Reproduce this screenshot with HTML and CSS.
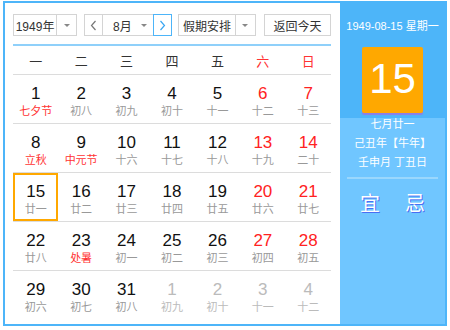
FILE: index.html
```html
<!DOCTYPE html>
<html lang="zh-CN">
<head>
    <meta charset="UTF-8">
    <title>万年历</title>
    <link rel="stylesheet" href="styles.css">
</head>
<body>
    <div class="calendar">
        <div class="main">
            <div class="toolbar">
                <div class="select year">
                    <span class="select-text">1949年</span>
                    <span class="select-arrow"><i></i></span>
                </div>
                <div class="month-box">
                    <span class="nav prev">
                        <svg width="7" height="11" viewBox="0 0 7 11"><polyline points="5.5,1 1.5,5.5 5.5,10" fill="none" stroke="#777" stroke-width="1.2"/></svg>
                    </span>
                    <div class="select month">
                        <span class="select-text">8月</span>
                        <span class="select-arrow"><i></i></span>
                    </div>
                    <span class="nav next">
                        <svg width="7" height="11" viewBox="0 0 7 11"><polyline points="1.5,1 5.5,5.5 1.5,10" fill="none" stroke="#3aa6f2" stroke-width="1.2"/></svg>
                    </span>
                </div>
                <div class="select holiday">
                    <span class="select-text">假期安排</span>
                    <span class="select-arrow"><i></i></span>
                </div>
                <button class="today-btn">返回今天</button>
            </div>

            <div class="week">
                <span>一</span><span>二</span><span>三</span><span>四</span><span>五</span>
                <span class="red">六</span><span class="red">日</span>
            </div>

            <div class="days">
                <div class="row">
                    <div class="day"><b>1</b><em class="fest">七夕节</em></div>
                    <div class="day"><b>2</b><em>初八</em></div>
                    <div class="day"><b>3</b><em>初九</em></div>
                    <div class="day"><b>4</b><em>初十</em></div>
                    <div class="day"><b>5</b><em>十一</em></div>
                    <div class="day weekend"><b>6</b><em>十二</em></div>
                    <div class="day weekend"><b>7</b><em>十三</em></div>
                </div>
                <div class="row">
                    <div class="day"><b>8</b><em class="fest">立秋</em></div>
                    <div class="day"><b>9</b><em class="fest">中元节</em></div>
                    <div class="day"><b>10</b><em>十六</em></div>
                    <div class="day"><b>11</b><em>十七</em></div>
                    <div class="day"><b>12</b><em>十八</em></div>
                    <div class="day weekend"><b>13</b><em>十九</em></div>
                    <div class="day weekend"><b>14</b><em>二十</em></div>
                </div>
                <div class="row">
                    <div class="day selected"><b>15</b><em>廿一</em></div>
                    <div class="day"><b>16</b><em>廿二</em></div>
                    <div class="day"><b>17</b><em>廿三</em></div>
                    <div class="day"><b>18</b><em>廿四</em></div>
                    <div class="day"><b>19</b><em>廿五</em></div>
                    <div class="day weekend"><b>20</b><em>廿六</em></div>
                    <div class="day weekend"><b>21</b><em>廿七</em></div>
                </div>
                <div class="row">
                    <div class="day"><b>22</b><em>廿八</em></div>
                    <div class="day"><b>23</b><em class="fest">处暑</em></div>
                    <div class="day"><b>24</b><em>初一</em></div>
                    <div class="day"><b>25</b><em>初二</em></div>
                    <div class="day"><b>26</b><em>初三</em></div>
                    <div class="day weekend"><b>27</b><em>初四</em></div>
                    <div class="day weekend"><b>28</b><em>初五</em></div>
                </div>
                <div class="row">
                    <div class="day"><b>29</b><em>初六</em></div>
                    <div class="day"><b>30</b><em>初七</em></div>
                    <div class="day"><b>31</b><em>初八</em></div>
                    <div class="day other"><b>1</b><em>初九</em></div>
                    <div class="day other"><b>2</b><em>初十</em></div>
                    <div class="day other"><b>3</b><em>十一</em></div>
                    <div class="day other"><b>4</b><em>十二</em></div>
                </div>
            </div>
        </div>

        <div class="side">
            <div class="side-top">
                <div class="side-date">1949-08-15 星期一</div>
                <div class="big-day">15</div>
            </div>
            <div class="side-bottom">
                <div class="lunar">
                    <p>七月廿一</p>
                    <p>己丑年【牛年】</p>
                    <p>壬申月 丁丑日</p>
                </div>
                <div class="yiji">
                    <span>宜</span>
                    <span>忌</span>
                </div>
            </div>
        </div>
    </div>
</body>
</html>
```

FILE: styles.css
```css
body {
    margin: 0;
    background: #fff;
    font-family: "Liberation Sans", "Noto Sans CJK SC", sans-serif;
    color: #333;
}

.calendar {
    box-sizing: border-box;
    width: 444px;
    height: 325px;
    margin: 1px 0 0 3px;
    border: 2px solid #4db5f9;
    display: flex;
}

/* left part */
.main {
    width: 335px;
    padding: 11px 9px 0 8px;
    box-sizing: border-box;
}

.toolbar {
    display: flex;
    height: 22px;
    font-size: 12px;
}

.select {
    box-sizing: border-box;
    height: 22px;
    border: 1px solid #d4d4d4;
    display: flex;
    align-items: center;
    background: #fff;
}

.select-text {
    flex: 1;
    text-align: center;
}

.select-arrow {
    width: 19px;
    height: 20px;
    border-left: 1px solid #d4d4d4;
    display: flex;
    align-items: center;
    justify-content: center;
}

.select-arrow i {
    width: 0;
    height: 0;
    border-left: 3px solid transparent;
    border-right: 3px solid transparent;
    border-top: 3px solid #888;
}

.year {
    width: 65px;
}

.month-box {
    display: flex;
    margin-left: 7px;
    box-sizing: border-box;
    height: 22px;
    border: 1px solid #d4d4d4;
}

.nav {
    width: 17px;
    display: flex;
    align-items: center;
    justify-content: center;
}

.prev {
    border-right: 1px solid #d4d4d4;
}

.next {
    box-sizing: border-box;
    width: 19px;
    height: 22px;
    margin: -1px -1px -1px 0;
    border: 1px solid #4db5f9;
}

.month {
    width: 50px;
    height: 20px;
    border: none;
}

.month .select-arrow {
    border-left: none;
}

.month .select-text {
    text-align: left;
    padding-left: 10px;
}

.holiday {
    width: 79px;
    margin-left: 6px;
}

.today-btn {
    box-sizing: border-box;
    width: 68px;
    height: 22px;
    margin-left: 8px;
    border: 1px solid #d4d4d4;
    background: #fff;
    font-family: inherit;
    font-size: 12px;
    color: #333;
    padding: 0;
}

.week {
    display: grid;
    grid-template-columns: repeat(7, 1fr);
    margin-top: 8px;
    border-top: 2px solid #8fd0fa;
    border-bottom: 1px solid #dcdcdc;
    height: 28px;
    align-items: center;
    text-align: center;
    font-size: 13px;
    color: #333;
}

.red {
    color: #f33;
}

.row {
    display: grid;
    grid-template-columns: repeat(7, 1fr);
    height: 48px;
    border-bottom: 1px solid #dcdcdc;
}

.row:last-child {
    border-bottom: none;
}

.day {
    box-sizing: border-box;
    display: flex;
    flex-direction: column;
    align-items: center;
    justify-content: center;
    padding-top: 5px;
}

.day b {
    font-weight: normal;
    font-size: 17px;
    line-height: 19px;
    color: #111;
}

.day em {
    font-style: normal;
    font-size: 11px;
    line-height: 16px;
    color: #999;
}

.day em.fest {
    color: #f33;
}

.weekend b {
    color: #f22;
}

.other b {
    color: #bbb;
}

.other em {
    color: #bbb;
}

.selected {
    border: 2px solid #ffa800;
    padding-top: 4px;
}

/* right part */
.side {
    flex: 1;
    display: flex;
    flex-direction: column;
    color: #fff;
}

.side-top {
    background: #4db5f9;
    height: 115px;
    display: flex;
    flex-direction: column;
    align-items: center;
}

.side-date {
    margin-top: 16px;
    font-size: 11px;
    line-height: 14px;
    white-space: nowrap;
}

.big-day {
    margin-top: 14px;
    width: 61px;
    height: 66px;
    background: #ffa800;
    border-radius: 2px;
    box-shadow: 0 2px 1px #8c7ee6;
    font-size: 42px;
    line-height: 64px;
    text-align: center;
}

.side-bottom {
    flex: 1;
    background: #70c6ff;
    padding: 0 7px;
}

.lunar {
    padding: 0 0 9px;
    border-bottom: 2px solid #9ad7fd;
    text-align: center;
    font-size: 11px;
}

.lunar p {
    margin: 0 0 7px;
    line-height: 12px;
}

.lunar p:last-child {
    margin-bottom: 0;
}

.yiji {
    display: flex;
    justify-content: center;
    gap: 25px;
    padding-top: 15px;
    font-size: 20px;
    line-height: 20px;
    text-shadow: 1px 1px 0 #4a6ef2;
}
```
